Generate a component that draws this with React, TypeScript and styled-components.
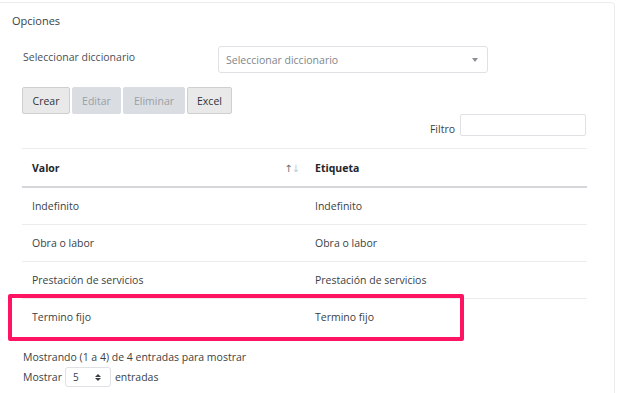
import styled, { createGlobalStyle } from 'styled-components';

const GlobalStyle = createGlobalStyle`
  html, body {
    margin: 0;
    padding: 0;
    background: #ffffff;
  }
  body {
    font-family: "Open Sans", "Noto Sans", Arial, sans-serif;
    font-size: 10.5px;
    color: #3a3f44;
    overflow: hidden;
  }
`;

const Page = styled.div`
  position: relative;
  width: 632px;
  height: 393px;
  padding-top: 2px;
  box-sizing: border-box;
  overflow: hidden;
`;

const Card = styled.section`
  width: 620px;
  margin-left: -5px;
  height: 400px;
  border: 1px solid #ececec;
  border-radius: 4px;
  padding: 10px 0 0 16px;
  box-sizing: border-box;
`;

const CardTitle = styled.h2`
  margin: 0;
  font-size: 11px;
  font-weight: 400;
  line-height: 16px;
  color: #3a3f44;
`;

const CardBody = styled.div`
  padding-left: 10px;
  width: 565px;
`;

const FormRow = styled.div`
  display: flex;
  align-items: center;
  margin-top: 17px;
`;

const FieldLabel = styled.label`
  width: 196px;
  padding-left: 1px;
  box-sizing: border-box;
  color: #4a4f55;
  margin-top: -5px;
`;

const SelectBox = styled.div`
  width: 270px;
  height: 27px;
  box-sizing: border-box;
  border: 1px solid #dfe1e4;
  border-radius: 3px;
  display: flex;
  align-items: center;
  justify-content: space-between;
  padding: 0 9px 0 7px;
  color: #80868c;
`;

const Caret = styled.span`
  width: 0;
  height: 0;
  border-left: 3px solid transparent;
  border-right: 3px solid transparent;
  border-top: 4px solid #8a8f94;
`;

const ButtonGroup = styled.div`
  display: flex;
  gap: 2px;
  margin-top: 14px;
`;

const ActionButton = styled.button<{ $disabled?: boolean; $width: number }>`
  width: ${p => p.$width}px;
  height: 27px;
  padding: 0;
  font-family: inherit;
  font-size: 10.5px;
  border-radius: 2px;
  border: 1px solid ${p => (p.$disabled ? '#dadde1' : '#cfcfcf')};
  background: ${p => (p.$disabled ? '#dadde1' : '#e9e9e9')};
  color: ${p => (p.$disabled ? '#9aa0a6' : '#2f3338')};
  cursor: ${p => (p.$disabled ? 'default' : 'pointer')};
`;

const FilterRow = styled.div`
  display: flex;
  justify-content: flex-end;
  align-items: flex-end;
  gap: 5px;
  padding-right: 1px;
`;

const FilterLabel = styled.span`
  color: #3a3f44;
  line-height: 14px;
`;

const FilterInput = styled.input`
  width: 126px;
  height: 22px;
  box-sizing: border-box;
  border: 1px solid #dfe1e4;
  border-radius: 2px;
  font-family: inherit;
`;

const Table = styled.table`
  width: 565px;
  margin-top: 12px;
  border-collapse: collapse;
  border-top: 1px solid #ececec;
`;

const HeadCell = styled.th<{ $width?: number }>`
  position: relative;
  width: ${p => (p.$width ? `${p.$width}px` : 'auto')};
  height: 37px;
  padding: 0 10px;
  text-align: left;
  font-weight: 700;
  color: #23272b;
  border-bottom: 2px solid #d4d6d9;
`;

const SortIcon = styled.span`
  position: absolute;
  right: 6px;
  top: 50%;
  transform: translateY(-50%);
  font-size: 10px;
  letter-spacing: -1px;
  font-weight: 400;
  font-family: "DejaVu Sans", sans-serif;
`;

const Arrow = styled.span<{ $active?: boolean }>`
  color: ${p => (p.$active ? '#6b6f73' : '#c4c7ca')};
`;

const Row = styled.tr`
  border-bottom: 1px solid #ececec;
  &:last-child {
    border-bottom: none;
  }
`;

const Cell = styled.td`
  height: 36px;
  padding: 0 10px;
  color: #3a3f44;
`;

const Footer = styled.div`
  margin-top: 14px;
  padding-left: 1px;
`;

const InfoText = styled.div`
  line-height: 16px;
`;

const LengthRow = styled.div`
  display: flex;
  align-items: center;
  gap: 3px;
  margin-top: 2px;
`;

const LengthSelect = styled.div`
  width: 46px;
  height: 20px;
  box-sizing: border-box;
  border: 1px solid #dfe1e4;
  border-radius: 3px;
  display: flex;
  align-items: center;
  justify-content: space-between;
  padding: 0 9px 0 7px;
  font-size: 10px;
  color: #3a3f44;
  margin-right: 1px;
`;

const Spinner = styled.span`
  display: flex;
  flex-direction: column;
  gap: 1px;
`;

const SpinTri = styled.span<{ $up?: boolean }>`
  width: 0;
  height: 0;
  border-left: 3px solid transparent;
  border-right: 3px solid transparent;
  ${p => (p.$up ? 'border-bottom: 3px solid #3a3f44;' : 'border-top: 3px solid #3a3f44;')}
`;

const Highlight = styled.div`
  position: absolute;
  left: 8px;
  top: 294px;
  width: 456px;
  height: 47px;
  box-sizing: border-box;
  border: 4px solid #ff1461;
  border-radius: 2px;
  pointer-events: none;
`;

const rows = ['Indefinito', 'Obra o labor', 'Prestación de servicios', 'Termino fijo'];

export default function App() {
  return (
    <>
      <GlobalStyle />
      <Page>
        <Card>
          <CardTitle>Opciones</CardTitle>
          <CardBody>
            <FormRow>
              <FieldLabel>Seleccionar diccionario</FieldLabel>
              <SelectBox>
                <span>Seleccionar diccionario</span>
                <Caret />
              </SelectBox>
            </FormRow>
            <ButtonGroup>
              <ActionButton $width={48}>Crear</ActionButton>
              <ActionButton $width={49} $disabled>Editar</ActionButton>
              <ActionButton $width={62} $disabled>Eliminar</ActionButton>
              <ActionButton $width={45}>Excel</ActionButton>
            </ButtonGroup>
            <FilterRow>
              <FilterLabel>Filtro</FilterLabel>
              <FilterInput />
            </FilterRow>
            <Table>
              <thead>
                <tr>
                  <HeadCell $width={263}>
                    Valor
                    <SortIcon>
                      <Arrow $active>↑</Arrow>
                      <Arrow>↓</Arrow>
                    </SortIcon>
                  </HeadCell>
                  <HeadCell>Etiqueta</HeadCell>
                </tr>
              </thead>
              <tbody>
                {rows.map(r => (
                  <Row key={r}>
                    <Cell>{r}</Cell>
                    <Cell>{r}</Cell>
                  </Row>
                ))}
              </tbody>
            </Table>
            <Footer>
              <InfoText>Mostrando (1 a 4) de 4 entradas para mostrar</InfoText>
              <LengthRow>
                <span>Mostrar</span>
                <LengthSelect>
                  <span>5</span>
                  <Spinner>
                    <SpinTri $up />
                    <SpinTri />
                  </Spinner>
                </LengthSelect>
                <span>entradas</span>
              </LengthRow>
            </Footer>
          </CardBody>
        </Card>
        <Highlight />
      </Page>
    </>
  );
}
